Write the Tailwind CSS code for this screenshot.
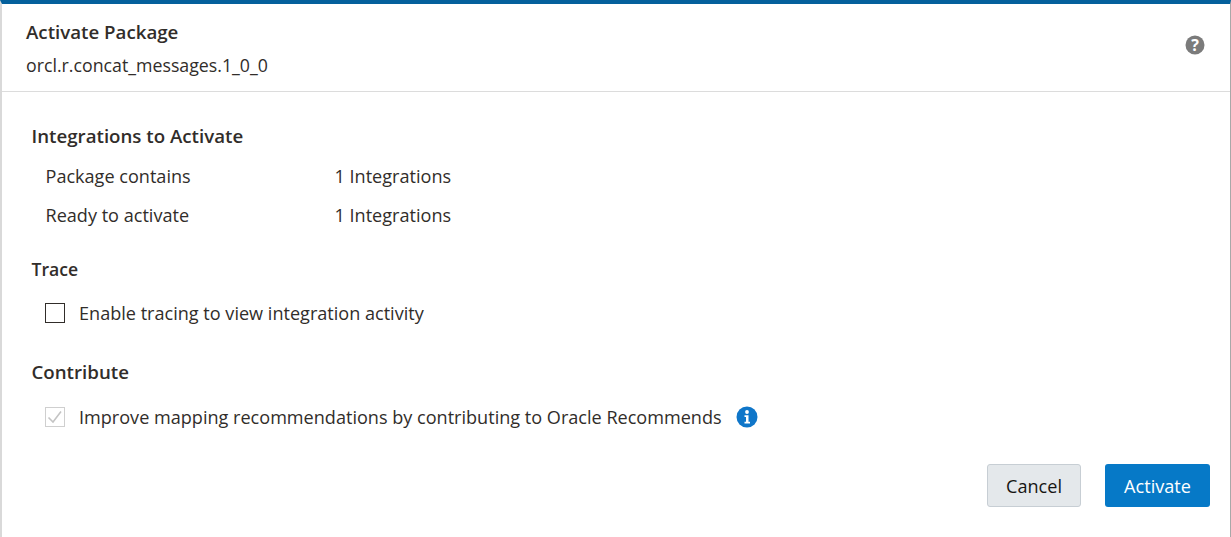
<!DOCTYPE html>
<html>
<head>
<meta charset="utf-8">
<script src="https://cdn.jsdelivr.net/npm/@tailwindcss/browser@4"></script>
</head>
<body class="m-0 bg-white overflow-hidden">
<div class="w-[1231px] h-[537px] flex flex-col border-t-4 border-t-[#04609c] border-l-2 border-l-[#d9d9d9] border-r border-r-[#a8a8a8] font-['Open_Sans',sans-serif] text-[18.08px] text-[#312d2a] overflow-hidden">
  <header class="h-[88px] shrink-0 border-b border-[#dcdcdc] pl-6 pr-6 flex items-center justify-between">
    <div class="flex flex-col">
      <div class="h-[24px] mt-[2px] leading-[24px] font-semibold text-[18.7px]">Activate Package</div>
      <div class="h-[24px] mt-[9px] leading-[24px] text-[17.75px]">orcl.r.concat_messages.1_0_0</div>
    </div>
    <svg class="w-5 h-5 -mt-[5px] mr-[1px]" viewBox="0 0 20 20"><circle cx="10" cy="10" r="9.5" fill="#7b7b7b"/><text x="10" y="15.5" text-anchor="middle" font-size="16" font-weight="700" fill="#fff" font-family="Open Sans">?</text></svg>
  </header>
  <main class="flex-1 flex flex-col pl-[29.5px] pr-5">
    <h2 class="mt-[32px] h-[24px] leading-[24px] font-semibold text-[18.7px]">Integrations to Activate</h2>
    <div class="mt-[16px] pl-[14px] flex h-[24px] leading-[24px]"><span class="w-[289px]">Package contains</span><span>1 Integrations</span></div>
    <div class="mt-[15px] pl-[14px] flex h-[24px] leading-[24px]"><span class="w-[289px]">Ready to activate</span><span>1 Integrations</span></div>
    <h2 class="mt-[30px] h-[24px] leading-[24px] font-semibold text-[17.6px]">Trace</h2>
    <label class="mt-[20px] pl-[13.5px] flex items-center h-[24px] leading-[24px]">
      <span class="w-5 h-5 border border-[#312d2a] bg-white shrink-0"></span>
      <span class="ml-[14px]">Enable tracing to view integration activity</span>
    </label>
    <h2 class="mt-[35px] h-[24px] leading-[24px] font-semibold text-[18.7px]">Contribute</h2>
    <label class="mt-[21px] pl-[13.5px] flex items-center h-[24px] leading-[24px]">
      <span class="w-5 h-5 border border-[#cfcfcf] bg-white shrink-0 flex items-center justify-center">
        <svg class="w-[18px] h-[18px]" viewBox="0 0 18 18" fill="none"><path d="M2.5 9.5 L7 14 L15 3.5" stroke="#c4c4c4" stroke-width="1.6"/></svg>
      </span>
      <span class="ml-[14px]">Improve mapping recommendations by contributing to Oracle Recommends</span>
      <svg class="w-[22px] h-[22px] ml-[14px] -mt-[1px]" viewBox="0 0 22 22"><circle cx="11" cy="11" r="10.5" fill="#0f76c9"/><circle cx="11" cy="6" r="1.9" fill="#fff"/><path d="M8.5 9.2h4v6.6h1.5v1.7H8.5v-1.7H10v-4.9H8.5z" fill="#fff"/></svg>
    </label>
    <div class="mt-[35px] flex justify-end gap-6">
      <button class="w-[94px] h-[43px] pt-[2px] rounded-[3px] border border-[#c7ced4] bg-[#e4e8eb] text-[#161513]">Cancel</button>
      <button class="w-[105px] h-[43px] pt-[2px] rounded-[3px] bg-[#0679c7] text-white">Activate</button>
    </div>
  </main>
</div>
</body>
</html>
